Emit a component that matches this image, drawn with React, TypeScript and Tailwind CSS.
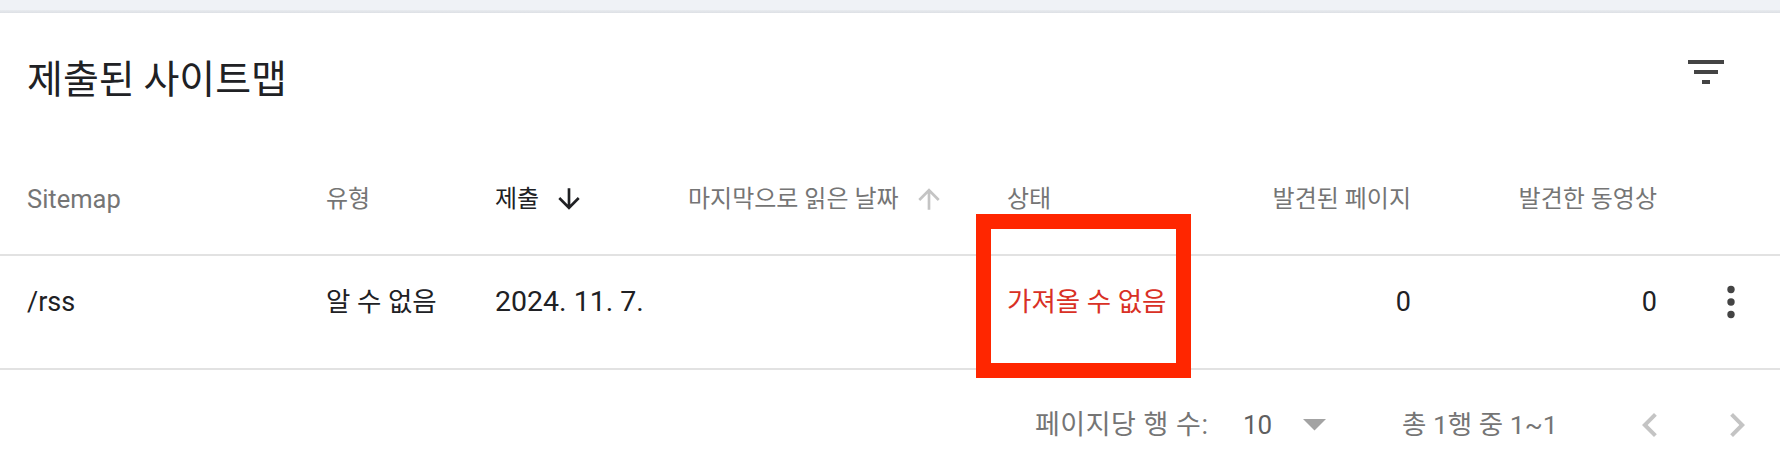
import React from "react";

function FilterIcon() {
  return (
    <svg width="48" height="48" viewBox="0 0 24 24">
      <path d="M10 18h4v-2h-4v2zM3 6v2h18V6H3zm3 7h12v-2H6v2z" fill="#444444" />
    </svg>
  );
}

function ArrowDown({ color }: { color: string }) {
  return (
    <svg width="32" height="32" viewBox="0 0 24 24">
      <path d="M20 12l-1.41-1.41L13 16.17V4h-2v12.17l-5.58-5.59L4 12l8 8 8-8z" fill={color} />
    </svg>
  );
}

function ArrowUp({ color }: { color: string }) {
  return (
    <svg width="32" height="32" viewBox="0 0 24 24">
      <path d="M4 12l1.41 1.41L11 7.83V20h2V7.83l5.58 5.59L20 12l-8-8-8 8z" fill={color} />
    </svg>
  );
}

function Kebab() {
  return (
    <svg width="16" height="40" viewBox="0 0 16 40">
      <circle cx="8" cy="7.5" r="3.7" fill="#444444" />
      <circle cx="8" cy="20" r="3.7" fill="#444444" />
      <circle cx="8" cy="32.5" r="3.7" fill="#444444" />
    </svg>
  );
}

function ChevronLeft() {
  return (
    <svg width="48" height="48" viewBox="0 0 24 24">
      <path d="M15.41 7.41L14 6l-6 6 6 6 1.41-1.41L10.83 12z" fill="#c4c4c4" />
    </svg>
  );
}

function ChevronRight() {
  return (
    <svg width="48" height="48" viewBox="0 0 24 24">
      <path d="M10 6L8.59 7.41 13.17 12l-4.58 4.59L10 18l6-6z" fill="#c4c4c4" />
    </svg>
  );
}

export default function App() {
  return (
    <div className="relative w-[1780px] h-[470px] overflow-hidden bg-white font-[Roboto,'Noto_Sans_CJK_KR',sans-serif]">
      {/* top strip */}
      <div className="h-[10px] bg-[#eff2f6]" />
      <div className="h-[3px] bg-gradient-to-b from-[#e8ebef] to-[#dde0e5]" />

      {/* title */}
      <div className="h-[131px] flex items-start justify-between pl-[27px] pr-[50px] pt-[35px]">
        <h1 className="mt-[9px] text-[39px] leading-[39px] text-[#202124] font-['Noto_Sans_CJK_KR',sans-serif]">
          제출된 사이트맵
        </h1>
        <FilterIcon />
      </div>

      {/* header row */}
      <div className="grid grid-cols-[326px_169px_193px_319px_223px_181px_246px_1fr] h-[110px] items-center text-[#757575]">
        <div className="pl-[27px] text-[25.5px]">Sitemap</div>
        <div className="text-[24px]">유형</div>
        <div className="flex items-center text-[24px] text-[#202124]">
          <span>제출</span>
          <span className="ml-[14px] flex">
            <ArrowDown color="#202124" />
          </span>
        </div>
        <div className="flex items-center text-[24px]">
          <span>마지막으로 읽은 날짜</span>
          <span className="ml-[14px] flex">
            <ArrowUp color="#c4c4c4" />
          </span>
        </div>
        <div className="text-[24px]">상태</div>
        <div className="text-right text-[24px]">발견된 페이지</div>
        <div className="text-right text-[24px]">발견한 동영상</div>
        <div />
      </div>
      <div className="h-[2px] bg-[#e2e2e2]" />

      {/* data row */}
      <div className="grid grid-cols-[326px_169px_193px_319px_223px_181px_246px_1fr] h-[112px] items-center pb-[20px] text-[#202124]">
        <div className="pl-[27px] text-[27px]">/rss</div>
        <div className="text-[26.5px]">알 수 없음</div>
        <div className="text-[28.5px]">2024. 11. 7.</div>
        <div />
        <div className="text-[26.5px] text-[#d93025]">가져올 수 없음</div>
        <div className="text-right text-[27px]">0</div>
        <div className="text-right text-[27px]">0</div>
        <div className="flex pl-[66px]">
          <Kebab />
        </div>
      </div>
      <div className="h-[2px] bg-[#e2e2e2]" />

      {/* footer */}
      <div className="h-[98px] flex items-center justify-end pr-[19px] pt-[12px] text-[#757575]">
        <div className="w-[208px] text-[27px] tracking-[0.5px]">페이지당 행 수:</div>
        <div className="w-[60px] text-[26px] text-[#5f5f5f]">10</div>
        <div className="w-[99px] flex">
          <svg width="23" height="12" viewBox="0 0 23 12">
            <polygon points="0,0 23,0 11.5,11.5" fill="#a3a3a3" />
          </svg>
        </div>
        <div className="w-[224px] text-[26.5px]">총 1행 중 1~1</div>
        <div className="flex">
          <ChevronLeft />
        </div>
        <div className="ml-[39px] flex">
          <ChevronRight />
        </div>
      </div>

      {/* annotation box */}
      <div className="absolute left-[976px] top-[214px] w-[215px] h-[164px] border-[15px] border-[#ff2600]" />
    </div>
  );
}
